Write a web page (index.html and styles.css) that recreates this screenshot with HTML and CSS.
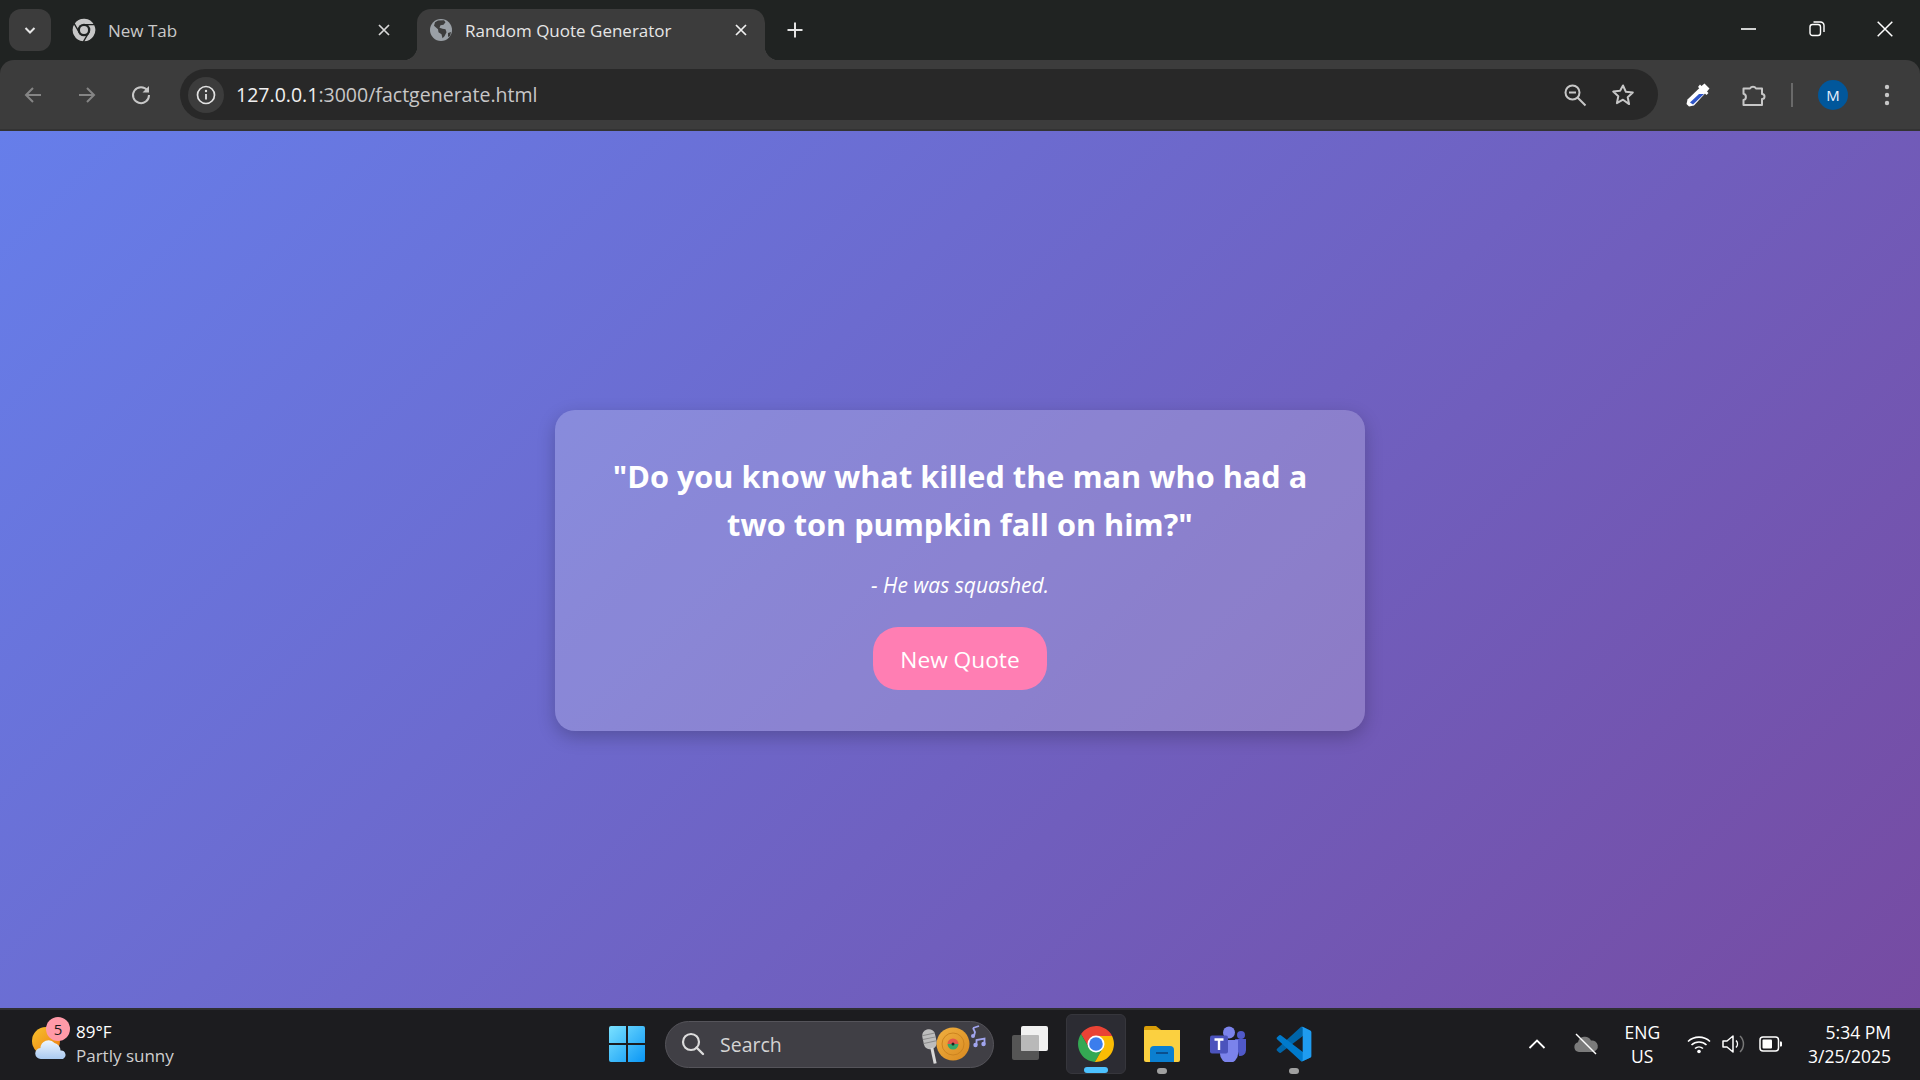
FILE: index.html
```html
<!DOCTYPE html>
<html lang="en">
<head>
<meta charset="utf-8">
<title>Random Quote Generator</title>
<link rel="stylesheet" href="styles.css">
</head>
<body>
<header class="tabstrip">
  <button class="tabsearch"><svg width="14" height="14" viewBox="0 0 14 14"><path d="M2.5 5l4.5 4.5L11.5 5" fill="none" stroke="#e6e6e6" stroke-width="2"/></svg></button>
  <div class="tab">
    <svg class="fav" width="24" height="24" viewBox="0 0 36 36"><path fill="#c7c7c7" stroke="#202322" stroke-width="2" d="M34.1 10A18 18 0 0 0 3.02 8.06L11.07 22 18 10zM3.02 8.06A18 18 0 0 0 16.88 35.94L24.93 22H11.07zM16.88 35.94A18 18 0 0 0 34.1 10H18l6.93 12z"/><circle cx="18" cy="18" r="9.500" fill="#202322"/><circle cx="18" cy="18" r="6" fill="#c7c7c7"/></svg>
    <span class="tabtitle">New Tab</span>
    <svg class="tabx" width="14" height="14" viewBox="0 0 14 14"><path d="M2 2l10 10M12 2L2 12" stroke="#d8d8d8" stroke-width="1.7"/></svg>
  </div>
  <div class="tab active">
    <svg class="fav" width="24" height="24" viewBox="0 0 24 24"><circle cx="12" cy="12" r="11" fill="#9aa0a6"/><path fill="#3c3c3c" d="M9 2.5l6-.3 1.5 2-2 2.5-3 .5-1 2.5 3 1 3 .5 1 3-2 4-2 2-1-4-3-2-.5-3-4-3.5 1-3.5zM19 15l3-1-1 4-2 1z"/></svg>
    <span class="tabtitle">Random Quote Generator</span>
    <svg class="tabx" width="14" height="14" viewBox="0 0 14 14"><path d="M2 2l10 10M12 2L2 12" stroke="#f0f0f0" stroke-width="1.7"/></svg>
  </div>
  <svg class="newtab" width="18" height="18" viewBox="0 0 18 18"><path d="M9 1.5v15M1.5 9h15" stroke="#e3e3e3" stroke-width="2"/></svg>
  <div class="winctl">
    <svg width="16" height="16" viewBox="0 0 16 16"><path d="M0 8h15" stroke="#fff" stroke-width="1.6"/></svg>
    <svg width="16" height="16" viewBox="0 0 16 16"><rect x="1" y="3.5" width="10.5" height="11" rx="2.5" fill="none" stroke="#fff" stroke-width="1.4"/><path d="M4.5 1h7a3.500 3.500 0 0 1 3.500 3.500V11" fill="none" stroke="#fff" stroke-width="1.4"/></svg>
    <svg width="16" height="16" viewBox="0 0 16 16"><path d="M.7.7l14.600 14.600M15.300.7L.7 15.300" stroke="#fff" stroke-width="1.500"/></svg>
  </div>
</header>

<nav class="toolbar">
  <div class="navbtns">
    <svg width="22" height="22" viewBox="0 0 22 22"><path d="M19 11H4M11 4l-7 7 7 7" fill="none" stroke="#858585" stroke-width="2"/></svg>
    <svg width="22" height="22" viewBox="0 0 22 22"><path d="M3 11h15M11 4l7 7-7 7" fill="none" stroke="#858585" stroke-width="2"/></svg>
    <svg width="22" height="22" viewBox="0 0 22 22"><path d="M17.500 6.500A8 8 0 1 0 19 11" fill="none" stroke="#c7c7c7" stroke-width="2"/><path d="M19 2v6.500h-6.500z" fill="#c7c7c7"/></svg>
  </div>
  <div class="omnibox">
    <span class="chip"><svg width="20" height="20" viewBox="0 0 20 20"><circle cx="10" cy="10" r="8.500" fill="none" stroke="#e3e3e3" stroke-width="1.700"/><path d="M10 9v5.500" stroke="#e3e3e3" stroke-width="1.800"/><circle cx="10" cy="6" r="1.200" fill="#e3e3e3"/></svg></span>
    <span class="url"><span class="host">127.0.0.1</span>:3000/factgenerate.html</span>
    <span class="omni-icons">
      <svg width="24" height="24" viewBox="0 0 24 24"><circle cx="9.500" cy="9.500" r="7" fill="none" stroke="#c7c7c7" stroke-width="2"/><path d="M6 9.500h7M14.500 14.500l8 8" stroke="#c7c7c7" stroke-width="2"/></svg>
      <svg width="24" height="24" viewBox="0 0 24 24"><path d="M12 2.500l2.900 6.300 6.900.8-5.100 4.700 1.400 6.800L12 16.700l-6.100 3.400 1.400-6.800-5.100-4.700 6.900-.8z" fill="none" stroke="#c7c7c7" stroke-width="2" stroke-linejoin="round"/></svg>
    </span>
  </div>
  <div class="tools">
    <svg class="t-drop" width="26" height="26" viewBox="0 0 26 26"><path d="M4 24.500l-2.500-2.500 1-4.500L15 5.500 20.500 11 9 23.500z" fill="#fff"/><path d="M5 20.500L14 12h5L8 22.500z" fill="#2f55c8"/><path d="M15 2.500l1.500 1.500 3-2.500 5 5-2.500 3 1.500 1.500-2 2L13 5z" fill="#fff"/></svg>
    <svg class="t-puzzle" width="26" height="26" viewBox="0 0 26 26"><path d="M2.500 6.500h6.500a3.500 3.500 0 0 1 6 0H21v5.500a2.500 2.500 0 0 1 0 5v6H2.500V18a3.200 3.200 0 0 0 0-6.200z" fill="none" stroke="#c7c7c7" stroke-width="2" stroke-linejoin="round"/></svg>
    <i class="t-sep"></i>
    <span class="avatar">M</span>
    <svg class="t-menu" width="6" height="24" viewBox="0 0 6 24"><circle cx="3" cy="4" r="2.200" fill="#c7c7c7"/><circle cx="3" cy="12" r="2.200" fill="#c7c7c7"/><circle cx="3" cy="20" r="2.200" fill="#c7c7c7"/></svg>
  </div>
</nav>

<main class="page">
  <section class="card">
    <p class="quote">"Do you know what killed the man who had a two ton pumpkin fall on him?"</p>
    <p class="author">- He was squashed.</p>
    <button class="newquote">New Quote</button>
  </section>
</main>

<footer class="taskbar">
  <div class="tb-left">
    <span class="weather">
      <svg width="36" height="36" viewBox="0 0 36 36"><defs><linearGradient id="sun" x1="0" y1="0" x2="1" y2="1"><stop offset="0" stop-color="#f7c22c"/><stop offset="1" stop-color="#ec7a12"/></linearGradient><linearGradient id="cl" x1="0" y1="0" x2="0" y2="1"><stop offset="0" stop-color="#eef6ff"/><stop offset="1" stop-color="#a9c9f0"/></linearGradient></defs><circle cx="16" cy="15" r="14" fill="url(#sun)"/><path d="M8 34a5.500 5.500 0 0 1-.5-11 8 8 0 0 1 14-5 7.500 7.500 0 0 1 6 7.500A4.500 4.500 0 0 1 30 34z" fill="url(#cl)" transform="translate(3 -1)"/></svg>
      <b class="badge">5</b>
    </span>
    <span class="wtext"><span class="temp">89°F</span><span class="cond">Partly sunny</span></span>
  </div>
  <div class="tb-center">
    <svg class="winlogo" width="36" height="36" viewBox="0 0 36 36"><defs><linearGradient id="win" x1="0" y1="0" x2="1" y2="1"><stop offset="0" stop-color="#7be2ff"/><stop offset="1" stop-color="#0a96f5"/></linearGradient></defs><path fill="url(#win)" d="M0 2a2 2 0 0 1 2-2h15v17H0zM19 0h15a2 2 0 0 1 2 2v15H19zM0 19h17v17H2a2 2 0 0 1-2-2zM19 19h17v15a2 2 0 0 1-2 2H19z"/></svg>
    <div class="searchbox">
      <svg width="24" height="24" viewBox="0 0 24 24"><circle cx="10" cy="10" r="8" fill="none" stroke="#dcdcdc" stroke-width="2.200"/><path d="M15.500 15.500l6.500 6.500" stroke="#dcdcdc" stroke-width="2.400" stroke-linecap="round"/></svg>
      <span class="searchtxt">Search</span>
      <svg class="promo" width="68" height="40" viewBox="0 0 68 40"><g transform="rotate(-12 10 20)"><rect x="3" y="5" width="13" height="20" rx="6" fill="#bdbdbd"/><path d="M3 10h13M3 14h13M3 18h13" stroke="#8b8b8b"/><path d="M10 24v16" stroke="#d8d8d8" stroke-width="3"/></g><defs><linearGradient id="disc" x1="0" y1="0" x2="1" y2="1"><stop offset="0" stop-color="#f0b040"/><stop offset="1" stop-color="#d98a20"/></linearGradient></defs><circle cx="32" cy="20" r="16.500" fill="url(#disc)"/><circle cx="32" cy="20" r="11" fill="none" stroke="#cc8420"/><path d="M26.500 20a5.500 5.500 0 0 1 11 0z" fill="#e2574c"/><path d="M26.500 20a5.500 5.500 0 0 0 11 0z" fill="#35a86b"/><circle cx="32" cy="20" r="1.500" fill="#222"/><path d="M52 4l6-2M52 4l2 4-1 4" fill="none" stroke="#a1a5ee" stroke-width="1.800"/><circle cx="52" cy="12" r="2" fill="#a1a5ee"/><path d="M55.500 21v-5l8-1.500v6" fill="none" stroke="#a1a5ee" stroke-width="1.800"/><circle cx="54.500" cy="21" r="2.200" fill="#a1a5ee"/><circle cx="62.500" cy="20" r="2.200" fill="#a1a5ee"/></svg>
    </div>
    <svg class="tv" width="36" height="36" viewBox="0 0 36 36"><rect x="0" y="9" width="27" height="25" rx="2" fill="#555"/><rect x="9" y="0" width="27" height="25" rx="2" fill="#f1f1f1"/><rect x="9" y="9" width="18" height="16" rx="1" fill="#b9b9b9"/></svg>
    <span class="tile on">
      <svg width="36" height="36" viewBox="0 0 36 36"><path fill="#ea4335" d="M34.100 10A18 18 0 0 0 3.020 8.060L11.070 22 18 10z"/><path fill="#34a853" d="M3.020 8.060A18 18 0 0 0 16.880 35.940L24.930 22H11.070z"/><path fill="#fbbc04" d="M16.880 35.940A18 18 0 0 0 34.100 10H18l6.930 12z"/><circle cx="18" cy="18" r="8.500" fill="#fff"/><circle cx="18" cy="18" r="6.800" fill="#3b7ded"/></svg>
      <i class="pip active-pip"></i>
    </span>
    <span class="tile">
      <svg width="36" height="36" viewBox="0 0 36 36"><path d="M0 2a2 2 0 0 1 2-2h10l5 4h19v10H0z" fill="#d89d08"/><path d="M0 4h15l3 0h18v30a2 2 0 0 1-2 2H2a2 2 0 0 1-2-2z" fill="#fbd040"/><path d="M6 24a4 4 0 0 1 4-4h16a4 4 0 0 1 4 4v12H6z" fill="#0b7fd0"/><path d="M12 27h12" stroke="#0a4f8e" stroke-width="2"/></svg>
      <i class="pip"></i>
    </span>
    <span class="tile">
      <svg width="36" height="36" viewBox="0 0 36 36"><circle cx="19" cy="6.500" r="6" fill="#7b83eb"/><circle cx="31" cy="9" r="4" fill="#5059c9"/><path d="M25 13h11v11a6 6 0 0 1-7 6z" fill="#5059c9"/><path d="M10 14h18v14a9 9 0 0 1-18 0z" fill="#7b83eb"/><rect x="0" y="9.500" width="18" height="18" rx="2" fill="#4b53bc"/><path d="M4.500 13.500h9M9 13.500V24" stroke="#fff" stroke-width="2.400"/></svg>
    </span>
    <span class="tile">
      <svg width="36" height="36" viewBox="1.500 1.800 29 28.400"><path fill="#0065a9" d="M29.010 5.030l-5.766-2.776a1.742 1.742 0 0 0-1.989.338L2.380 19.800A1.166 1.166 0 0 0 2.300 21.447c.025.027.05.053.077.077l1.541 1.400a1.165 1.165 0 0 0 1.489.066L28.142 5.750A1.158 1.158 0 0 1 30 6.672V6.605a1.748 1.748 0 0 0-.99-1.575z"/><path fill="#007acc" d="M29.010 26.970l-5.766 2.777a1.745 1.745 0 0 1-1.989-.338L2.380 12.200A1.166 1.166 0 0 1 2.300 10.553c.025-.027.05-.053.077-.077l1.541-1.400A1.165 1.165 0 0 1 5.410 9.010L28.142 26.250A1.158 1.158 0 0 0 30 25.328V25.400a1.749 1.749 0 0 1-.99 1.570z"/><path fill="#1f9cf0" d="M23.244 29.747a1.745 1.745 0 0 1-1.989-.338A1.025 1.025 0 0 0 23 28.684V3.316a1.024 1.024 0 0 0-1.749-.724 1.744 1.744 0 0 1 1.989-.339l5.765 2.772A1.748 1.748 0 0 1 30 6.600V25.400a1.748 1.748 0 0 1-.991 1.576z"/></svg>
      <i class="pip"></i>
    </span>
  </div>
  <div class="tb-right">
    <svg class="tr-up" width="18" height="12" viewBox="0 0 18 12"><path d="M1.500 10L9 2.500 16.500 10" fill="none" stroke="#fff" stroke-width="1.800"/></svg>
    <svg class="tr-cloud" width="26" height="26" viewBox="0 0 26 26"><path d="M6 21a5 5 0 0 1-1-9.800 7 7 0 0 1 13-1.700 5.500 5.500 0 0 1 2 11.500z" fill="#7b7b7b"/><path d="M3 3l20 20" stroke="#fff" stroke-width="1.400"/></svg>
    <span class="lang">ENG<br>US</span>
    <svg class="tr-wifi" width="24" height="20" viewBox="0 0 24 20"><path d="M1 7.500a16 16 0 0 1 22 0M4.500 11a11 11 0 0 1 15 0M8 14.500a6 6 0 0 1 8 0" fill="none" stroke="#fff" stroke-width="1.600"/><circle cx="12" cy="17.500" r="1.800" fill="#fff"/></svg>
    <svg class="tr-vol" width="26" height="22" viewBox="0 0 26 22"><path d="M1 8v6h4l6 5V3L5 8z" fill="none" stroke="#fff" stroke-width="1.500" stroke-linejoin="round"/><path d="M14 7.500a5 5 0 0 1 0 7" fill="none" stroke="#fff" stroke-width="1.500"/><path d="M18 3a11 11 0 0 1 0 16" fill="none" stroke="#777" stroke-width="1.500"/></svg>
    <svg class="tr-bat" width="24" height="16" viewBox="0 0 24 16"><rect x="1" y="1" width="18.500" height="14" rx="3" fill="none" stroke="#fff" stroke-width="1.500"/><rect x="3.500" y="3.500" width="9.500" height="9" rx="1" fill="#fff"/><path d="M21 5.500h1a1 1 0 0 1 1 1v3a1 1 0 0 1-1 1h-1z" fill="#fff"/></svg>
    <span class="clock">5:34 PM<br>3/25/2025</span>
  </div>
</footer>
</body>
</html>
```
FILE: styles.css
```css
* { box-sizing: border-box; }
html, body { height: 100%; margin: 0; }
body {
  display: flex;
  flex-direction: column;
  width: 1920px;
  height: 1080px;
  overflow: hidden;
  font-family: "Open Sans", "Noto Sans", sans-serif;
  background: #202322;
}

/* tab strip */
.tabstrip {
  flex: 0 0 60px;
  display: flex;
  align-items: flex-end;
  padding-left: 9px;
  background: #202322;
  color: #e3e3e3;
}
.tabsearch {
  width: 42px;
  height: 42px;
  margin-bottom: 9px;
  margin-right: 8px;
  padding: 0;
  border: 0;
  border-radius: 12px;
  background: #3c3c3c;
  display: flex;
  align-items: center;
  justify-content: center;
}
.tab {
  position: relative;
  width: 358px;
  height: 51px;
  display: flex;
  align-items: center;
  padding: 0 26px 9px 13px;
  font-size: 17px;
  color: #c9c9c9;
}
.tab.active {
  width: 348px;
  border-radius: 14px 14px 0 0;
  background: #3c3c3c;
  color: #e6e6e6;
  padding-left: 12px;
  padding-right: 17px;
}
.tab.active::before,
.tab.active::after {
  content: "";
  position: absolute;
  bottom: 0;
  width: 14px;
  height: 14px;
}
.tab.active::before { left: -14px; background: radial-gradient(circle at 0 0, transparent 14px, #3c3c3c 14.500px); }
.tab.active::after { right: -14px; background: radial-gradient(circle at 100% 0, transparent 14px, #3c3c3c 14.500px); }
.fav { flex: none; margin-right: 12px; }
.tabtitle { flex: 1; white-space: nowrap; }
.tabx { flex: none; }
.newtab { margin: 0 0 21px 21px; }
.winctl {
  margin-left: auto;
  align-self: stretch;
  display: flex;
  align-items: center;
  gap: 52px;
  padding: 0 27px 2px 0;
}

/* toolbar */
.toolbar {
  flex: 0 0 71px;
  display: flex;
  align-items: center;
  background: #3c3c3c;
  border-radius: 14px 14px 0 0;
  border-bottom: 2px solid #333;
}
.navbtns {
  display: flex;
  gap: 32px;
  padding-left: 22px;
  width: 180px;
}
.omnibox {
  width: 1478px;
  height: 51px;
  border-radius: 26px;
  background: #282828;
  display: flex;
  align-items: center;
  padding: 0 23px 0 8px;
}
.chip {
  width: 36px;
  height: 36px;
  border-radius: 50%;
  background: #3c3c3c;
  display: flex;
  align-items: center;
  justify-content: center;
  margin-right: 12px;
}
.url { font-size: 19.550px; color: #c7c7c7; white-space: nowrap; }
.host { color: #f0f0f0; }
.omni-icons { margin-left: auto; display: flex; gap: 24px; }
.tools { flex: 1; display: flex; align-items: center; padding-left: 27px; }
.t-puzzle { margin-left: 30px; }
.t-sep { width: 2px; height: 24px; background: #6a6a6a; margin-left: 24px; }
.avatar {
  width: 30px;
  height: 30px;
  margin-left: 25px;
  border-radius: 50%;
  background: #01579b;
  color: #e8f0fe;
  font-size: 15px;
  display: flex;
  align-items: center;
  justify-content: center;
}
.t-menu { margin-left: 36px; }

/* page */
.page {
  flex: 1;
  display: flex;
  align-items: center;
  justify-content: center;
  padding-top: 2px;
  background: linear-gradient(135deg, #667eea, #764ba2);
}
.card {
  width: 810px;
  padding: 42px 50px 41px;
  text-align: center;
  color: #fff;
  background: rgba(255, 255, 255, 0.2);
  border-radius: 20px;
  box-shadow: 0 6px 18px rgba(0, 0, 0, 0.22);
}
.quote {
  margin: 0 0 23px;
  font-size: 30.700px;
  line-height: 48px;
  font-weight: 700;
}
.author {
  margin: 0 0 27px;
  font-size: 21px;
  line-height: 29px;
  font-style: italic;
}
.newquote {
  width: 174px;
  height: 63px;
  padding: 2px 0 0;
  border: 0;
  border-radius: 25px;
  background: #ff7eb3;
  color: #fff;
  font: 400 22.700px "Open Sans", "Noto Sans", sans-serif;
}

/* taskbar */
.taskbar {
  flex: 0 0 72px;
  display: grid;
  grid-template-columns: 609px auto 1fr;
  align-items: center;
  padding-bottom: 2px;
  background: #1c1c1f;
  border-top: 2px solid #2f2f33;
  color: #fff;
}
.tb-left { display: flex; align-items: center; padding-left: 30px; }
.weather { position: relative; width: 36px; height: 36px; margin-right: 10px; }
.badge {
  position: absolute;
  top: -9px;
  left: 16px;
  width: 24px;
  height: 24px;
  border-radius: 50%;
  background: #ff9aa8;
  color: #1b1b1b;
  font: 400 15px/24px "Open Sans", sans-serif;
  text-align: center;
}
.wtext { display: flex; flex-direction: column; font-size: 17px; line-height: 24px; }
.cond { color: #cfcfcf; }
.tb-center { display: flex; align-items: center; }
.winlogo { flex: none; }
.searchbox {
  width: 329px;
  height: 47px;
  margin: 0 18px 0 20px;
  padding: 0 4px 0 15px;
  border-radius: 24px;
  background: #403f45;
  border: 1px solid #55545a;
  display: flex;
  align-items: center;
  color: #d4d4d4;
  font-size: 19.500px;
}
.searchtxt { margin-left: 15px; }
.promo { margin-left: auto; }
.tv { flex: none; margin-right: 18px; }
.tile {
  position: relative;
  width: 60px;
  height: 60px;
  margin-right: 6px;
  display: flex;
  align-items: center;
  justify-content: center;
  border-radius: 6px;
}
.tile.on { background: #2c2c33; border: 1px solid #36363c; }
.pip {
  position: absolute;
  bottom: 0;
  left: 50%;
  width: 10px;
  height: 6px;
  margin-left: -5px;
  border-radius: 3px;
  background: #a0a0a0;
}
.pip.active-pip { width: 24px; margin-left: -12px; background: #4cc2ff; }
.tb-right { display: flex; align-items: center; justify-content: flex-end; padding-right: 29px; }
.lang { font-size: 17.500px; line-height: 24px; text-align: center; margin: 0 27px 0 25px; }
.tr-cloud { margin-left: 27px; }
.tr-vol { margin-left: 11px; }
.tr-bat { margin-left: 11px; }
.clock { margin-left: 25px; font-size: 17.500px; line-height: 24px; text-align: right; }
```
